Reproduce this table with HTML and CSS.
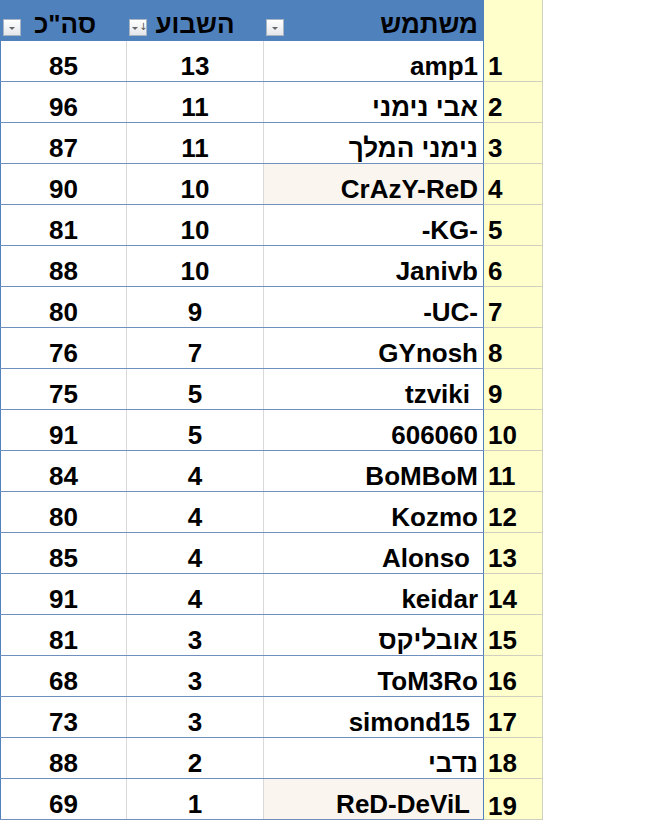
FILE: index.html
```html
<!DOCTYPE html>
<html>
<head>
<meta charset="utf-8">
<link rel="stylesheet" href="styles.css">
</head>
<body>
<div class="sheet">
  <div class="row head">
    <div class="cell c1"><span class="fbtn"><span class="tri"></span></span><span class="htxt">סה"כ</span></div>
    <div class="cell c2"><span class="fbtn sort"><span class="tri"></span><span class="arr">↓</span></span><span class="htxt">השבוע</span></div>
    <div class="cell c3"><span class="fbtn"><span class="tri"></span></span><span class="htxt">משתמש</span></div>
    <div class="cell c4"></div>
  </div>
  <div class="row"><div class="cell c1">85</div><div class="cell c2">13</div><div class="cell c3">amp1</div><div class="cell c4">1</div></div>
  <div class="row"><div class="cell c1">96</div><div class="cell c2">11</div><div class="cell c3">אבי נימני</div><div class="cell c4">2</div></div>
  <div class="row"><div class="cell c1">87</div><div class="cell c2">11</div><div class="cell c3">נימני המלך</div><div class="cell c4">3</div></div>
  <div class="row"><div class="cell c1">90</div><div class="cell c2">10</div><div class="cell c3 cream">CrAzY-ReD</div><div class="cell c4">4</div></div>
  <div class="row"><div class="cell c1">81</div><div class="cell c2">10</div><div class="cell c3">-KG-</div><div class="cell c4">5</div></div>
  <div class="row"><div class="cell c1">88</div><div class="cell c2">10</div><div class="cell c3">Janivb</div><div class="cell c4">6</div></div>
  <div class="row"><div class="cell c1">80</div><div class="cell c2">9</div><div class="cell c3">-UC-</div><div class="cell c4">7</div></div>
  <div class="row"><div class="cell c1">76</div><div class="cell c2">7</div><div class="cell c3">GYnosh</div><div class="cell c4">8</div></div>
  <div class="row"><div class="cell c1">75</div><div class="cell c2">5</div><div class="cell c3 pad">tzviki</div><div class="cell c4">9</div></div>
  <div class="row"><div class="cell c1">91</div><div class="cell c2">5</div><div class="cell c3">606060</div><div class="cell c4">10</div></div>
  <div class="row"><div class="cell c1">84</div><div class="cell c2">4</div><div class="cell c3">BoMBoM</div><div class="cell c4">11</div></div>
  <div class="row"><div class="cell c1">80</div><div class="cell c2">4</div><div class="cell c3">Kozmo</div><div class="cell c4">12</div></div>
  <div class="row"><div class="cell c1">85</div><div class="cell c2">4</div><div class="cell c3 pad">Alonso</div><div class="cell c4">13</div></div>
  <div class="row"><div class="cell c1">91</div><div class="cell c2">4</div><div class="cell c3">keidar</div><div class="cell c4">14</div></div>
  <div class="row"><div class="cell c1">81</div><div class="cell c2">3</div><div class="cell c3">אובליקס</div><div class="cell c4">15</div></div>
  <div class="row"><div class="cell c1">68</div><div class="cell c2">3</div><div class="cell c3">ToM3Ro</div><div class="cell c4">16</div></div>
  <div class="row"><div class="cell c1">73</div><div class="cell c2">3</div><div class="cell c3 pad">simond15</div><div class="cell c4">17</div></div>
  <div class="row"><div class="cell c1">88</div><div class="cell c2">2</div><div class="cell c3">נדבי</div><div class="cell c4">18</div></div>
  <div class="row"><div class="cell c1">69</div><div class="cell c2">1</div><div class="cell c3 cream pad">ReD-DeViL</div><div class="cell c4 low">19</div></div>
</div>
</body>
</html>
```
FILE: styles.css
```css
html, body {
  margin: 0;
  padding: 0;
  background: #ffffff;
}
.sheet {
  width: 543px;
  font-family: "Liberation Sans", Arial, sans-serif;
  font-weight: bold;
  font-size: 26px;
  color: #000;
}
.row {
  display: grid;
  grid-template-columns: 127px 137px 220px 59px;
  height: 41px;
  box-sizing: border-box;
  border-bottom: 1px solid #6f8fbf;
}
.row.head {
  height: 41px;
  border-bottom: none;
}
.cell {
  box-sizing: border-box;
  display: flex;
  align-items: flex-end;
  padding-bottom: 2px;
  line-height: 1;
  position: relative;
}
.c1 {
  border-left: 1px solid #4f81bd;
  border-right: 1px solid #d9d9d9;
  justify-content: center;
}
.c2 {
  border-right: 1px solid #d9d9d9;
  justify-content: center;
}
.c3 {
  justify-content: flex-end;
  padding-right: 5px;
  border-right: 1px solid #4f81bd;
}
.c3.pad { padding-right: 13px; }
.cream { background: #faf6ef; }
.c4 {
  background: #ffffcc;
  border-right: 1px solid #d0d0c0;
  justify-content: flex-start;
  padding-left: 4px;
  margin-bottom: -1px;
  border-bottom: 1px solid #d0d0c0;
}
.c4.low { padding-bottom: 0; }
.head .cell {
  background: #4f81bd;
  border-color: #4f81bd;
  padding-bottom: 4px;
}
.head .c4 {
  background: #ffffcc;
  border-right: 1px solid #d0d0c0;
  border-bottom: 1px solid #d0d0c0;
}
.head .c1 { border-right: 1px solid #4f81bd; }
.htxt {
  display: block;
}
.head .c1 .htxt { margin-left: 3px; }
.fbtn {
  position: absolute;
  left: 2px;
  top: 19px;
  width: 18px;
  height: 17px;
  box-sizing: border-box;
  border: 1px solid #a9b4c2;
  background: linear-gradient(#ffffff, #e4e6ea);
}
.tri {
  position: absolute;
  left: 5px;
  top: 7px;
  width: 0;
  height: 0;
  border-left: 3px solid transparent;
  border-right: 3px solid transparent;
  border-top: 3px solid #666;
}
.fbtn.sort .tri { left: 2px; }
.arr {
  position: absolute;
  left: 9px;
  top: 2px;
  font-family: "DejaVu Sans", sans-serif;
  font-size: 10px;
  font-weight: normal;
  color: #555;
  line-height: 1;
}
```
